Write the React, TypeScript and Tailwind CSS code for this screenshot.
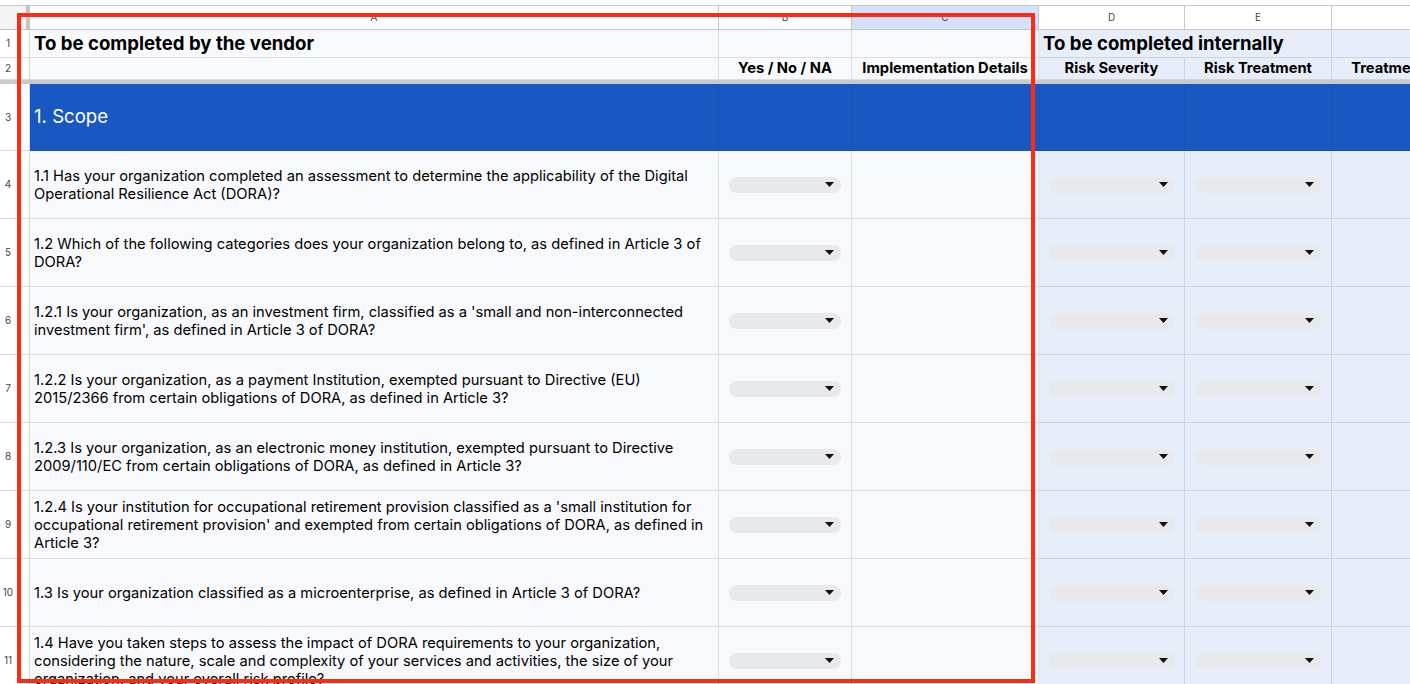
import React from 'react';

const COLS = [
  { key: 'A', w: 'w-[689px]' },
  { key: 'B', w: 'w-[133px]' },
  { key: 'C', w: 'w-[187px]' },
  { key: 'D', w: 'w-[146px]' },
  { key: 'E', w: 'w-[147px]' },
  { key: 'F', w: 'w-[200px]' },
];

const QUESTIONS = [
  '1.1 Has your organization completed an assessment to determine the applicability of the Digital Operational Resilience Act (DORA)?',
  '1.2 Which of the following categories does your organization belong to, as defined in Article 3 of DORA?',
  "1.2.1 Is your organization, as an investment firm, classified as a 'small and non-interconnected investment firm', as defined in Article 3 of DORA?",
  '1.2.2 Is your organization, as a payment Institution, exempted pursuant to Directive (EU) 2015/2366 from certain obligations of DORA, as defined in Article 3?',
  '1.2.3 Is your organization, as an electronic money institution, exempted pursuant to Directive 2009/110/EC from certain obligations of DORA, as defined in Article 3?',
  "1.2.4 Is your institution for occupational retirement provision classified as a 'small institution for occupational retirement provision' and exempted from certain obligations of DORA, as defined in Article 3?",
  '1.3 Is your organization classified as a microenterprise, as defined in Article 3 of DORA?',
  '1.4 Have you taken steps to assess the impact of DORA requirements to your organization, considering the nature, scale and complexity of your services and activities, the size of your organization, and your overall risk profile?',
];

const RowNum: React.FC<{ n: number; h: string }> = ({ n, h }) => (
  <div className={`w-[30px] shrink-0 ${h} border-r border-b border-[#dadce0] bg-white flex items-center text-[10px] text-[#444746]`}>
    <span className="w-[16px] text-center">{n}</span>
  </div>
);

const Chip: React.FC = () => (
  <div className="h-[16px] w-full rounded-full bg-[#e8e9ec] flex items-center justify-end pr-[7px]">
    <svg width="9" height="5" viewBox="0 0 9 5">
      <path d="M0 0 L9 0 L4.5 5 Z" fill="#111" />
    </svg>
  </div>
);

const light = 'bg-[#f8f9fc] border-[#dcdee3]';
const tint = 'bg-[#e8eef9] border-[#cdd4e2]';

export default function App() {
  return (
    <div className="relative w-[1410px] h-[684px] overflow-hidden bg-white pt-[5px] font-['Inter',sans-serif] text-black">
      {/* column letters */}
      <div className="flex h-[25px] border-t border-[#c7c7c7]">
        <div className="w-[30px] shrink-0 bg-[#f3f4f6] border-r-[4px] border-b border-[#c4c4c4]" />
        {COLS.map((c) => (
          <div
            key={c.key}
            className={`${c.w} shrink-0 border-r border-b border-[#c7c7c7] flex items-center justify-center text-[10px] text-[#444746] ${c.key === 'C' ? 'bg-[#d3e3fd]' : 'bg-white'}`}
          >
            {c.key}
          </div>
        ))}
      </div>

      {/* row 1 */}
      <div className="flex h-[28px]">
        <RowNum n={1} h="h-[28px]" />
        <div className={`w-[689px] shrink-0 border-r border-b ${light} flex items-center px-[4px] text-[18.6px] font-bold whitespace-nowrap`}>
          To be completed by the vendor
        </div>
        <div className={`w-[133px] shrink-0 border-r border-b ${light}`} />
        <div className={`w-[187px] shrink-0 border-r border-b ${light}`} />
        <div className={`w-[293px] shrink-0 border-r border-b ${tint} flex items-center px-[4px] text-[18.6px] font-bold whitespace-nowrap`}>
          To be completed internally
        </div>
        <div className={`w-[200px] shrink-0 border-r border-b ${tint}`} />
      </div>

      {/* row 2 */}
      <div className="flex h-[22px]">
        <RowNum n={2} h="h-[22px]" />
        <div className={`w-[689px] shrink-0 border-r border-b ${light}`} />
        <div className={`w-[133px] shrink-0 border-r border-b ${light} flex items-center justify-center text-[14.7px] font-bold whitespace-nowrap`}>
          Yes / No / NA
        </div>
        <div className={`w-[187px] shrink-0 border-r border-b ${light} flex items-center justify-center text-[14.7px] font-bold whitespace-nowrap`}>
          Implementation Details
        </div>
        <div className={`w-[146px] shrink-0 border-r border-b ${tint} flex items-center justify-center text-[14.7px] font-bold whitespace-nowrap`}>
          Risk Severity
        </div>
        <div className={`w-[147px] shrink-0 border-r border-b ${tint} flex items-center justify-center text-[14.7px] font-bold whitespace-nowrap`}>
          Risk Treatment
        </div>
        <div className={`w-[200px] shrink-0 border-r border-b ${tint} flex items-center justify-center text-[14.7px] font-bold whitespace-nowrap`}>
          Treatment Description
        </div>
      </div>

      {/* freeze line */}
      <div className="h-[4px] bg-[#cacaca]" />

      {/* row 3 section */}
      <div className="flex h-[67px]">
        <RowNum n={3} h="h-[67px]" />
        {COLS.map((c) => (
          <div
            key={c.key}
            className={`${c.w} shrink-0 border-r border-b border-[#1850b3] bg-[#1a58c1] flex items-center px-[4px] text-[18.6px] text-white`}
          >
            {c.key === 'A' ? '1. Scope' : ''}
          </div>
        ))}
      </div>

      {/* question rows */}
      {QUESTIONS.map((q, i) => (
        <div key={i} className="flex h-[68px]">
          <RowNum n={i + 4} h="h-[68px]" />
          <div className={`w-[689px] shrink-0 border-r border-b ${light} flex items-center px-[4px] text-[14.7px] leading-[18px]`}>
            <span>{q}</span>
          </div>
          <div className={`w-[133px] shrink-0 border-r border-b ${light} flex items-center pl-[10px] pr-[10px]`}>
            <Chip />
          </div>
          <div className={`w-[187px] shrink-0 border-r border-b ${light}`} />
          <div className={`w-[146px] shrink-0 border-r border-b ${tint} flex items-center pl-[10px] pr-[9px]`}>
            <Chip />
          </div>
          <div className={`w-[147px] shrink-0 border-r border-b ${tint} flex items-center pl-[10px] pr-[10px]`}>
            <Chip />
          </div>
          <div className={`w-[200px] shrink-0 border-r border-b ${tint}`} />
        </div>
      ))}

      {/* annotation frame */}
      <div className="absolute left-[17px] top-[13px] w-[1018px] h-[670px] border-[4px] border-[#fe2b12] pointer-events-none" />
    </div>
  );
}
